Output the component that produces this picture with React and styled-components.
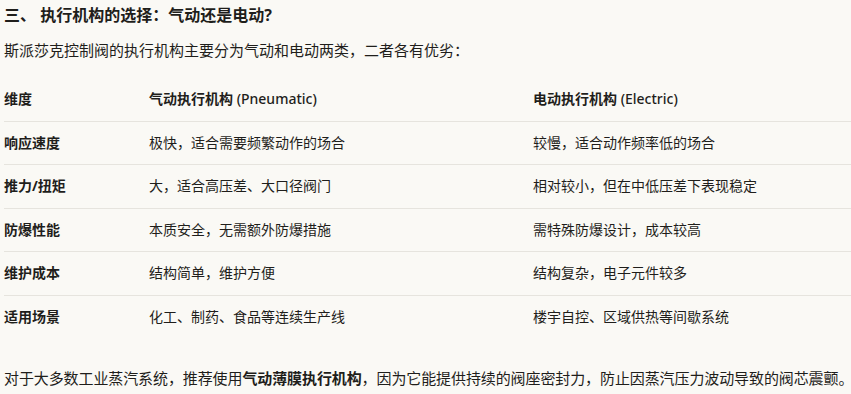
import React from "react";
import styled, { createGlobalStyle } from "styled-components";

const rows = [
  ["响应速度", "极快，适合需要频繁动作的场合", "较慢，适合动作频率低的场合"],
  ["推力/扭矩", "大，适合高压差、大口径阀门", "相对较小，但在中低压差下表现稳定"],
  ["防爆性能", "本质安全，无需额外防爆措施", "需特殊防爆设计，成本较高"],
  ["维护成本", "结构简单，维护方便", "结构复杂，电子元件较多"],
  ["适用场景", "化工、制药、食品等连续生产线", "楼宇自控、区域供热等间歇系统"],
];

const GlobalStyle = createGlobalStyle`
  body {
    margin: 0;
    background: #faf9f5;
    color: #1f1e1b;
    font-family: "Noto Sans", "Noto Sans CJK SC", sans-serif;
    overflow: hidden;
  }
`;

const Page = styled.div`
  padding: 3px 0 0 4px;
`;

const Heading = styled.h3`
  margin: 0;
  font-size: 16px;
  line-height: 24px;
  font-weight: 700;
`;

const Paragraph = styled.p`
  margin: ${({ $top }) => $top}px 0 0;
  font-size: 15px;
  line-height: 24px;
  letter-spacing: ${({ $tight }) => ($tight ? "-0.1px" : "0")};
  white-space: nowrap;

  strong {
    font-weight: 700;
  }
`;

const Table = styled.table`
  margin-top: 16px;
  width: 100%;
  border-collapse: collapse;
  table-layout: fixed;
  font-size: 14px;
`;

const Cell = styled.td`
  width: ${({ $width }) => ($width ? `${$width}px` : "auto")};
  padding: 11px 0;
  line-height: 20.5px;
  text-align: left;
  vertical-align: middle;
  font-weight: ${({ $bold }) => ($bold ? 700 : 400)};
  white-space: nowrap;
`;

const HeadCell = styled(Cell).attrs({ as: "th" })`
  font-weight: 700;
`;

const Latin = styled.span`
  font-weight: 500;
`;

const Row = styled.tr`
  border-bottom: 1px solid #e6e4de;

  tbody &:last-child {
    border-bottom: none;
  }
`;

export default function App() {
  return (
    <>
      <GlobalStyle />
      <Page>
        <Heading>三、 执行机构的选择：气动还是电动?</Heading>
        <Paragraph $top={11}>
          斯派莎克控制阀的执行机构主要分为气动和电动两类，二者各有优劣：
        </Paragraph>
        <Table>
          <thead>
            <Row>
              <HeadCell $width={145}>维度</HeadCell>
              <HeadCell $width={384}>
                气动执行机构 <Latin>(Pneumatic)</Latin>
              </HeadCell>
              <HeadCell>
                电动执行机构 <Latin>(Electric)</Latin>
              </HeadCell>
            </Row>
          </thead>
          <tbody>
            {rows.map(([label, pneumatic, electric]) => (
              <Row key={label}>
                <Cell $bold>{label}</Cell>
                <Cell>{pneumatic}</Cell>
                <Cell>{electric}</Cell>
              </Row>
            ))}
          </tbody>
        </Table>
        <Paragraph $top={28} $tight>
          对于大多数工业蒸汽系统，推荐使用<strong>气动薄膜执行机构</strong>，因为它能提供持续的阀座密封力，防止因蒸汽压力波动导致的阀芯震颤。
        </Paragraph>
      </Page>
    </>
  );
}
